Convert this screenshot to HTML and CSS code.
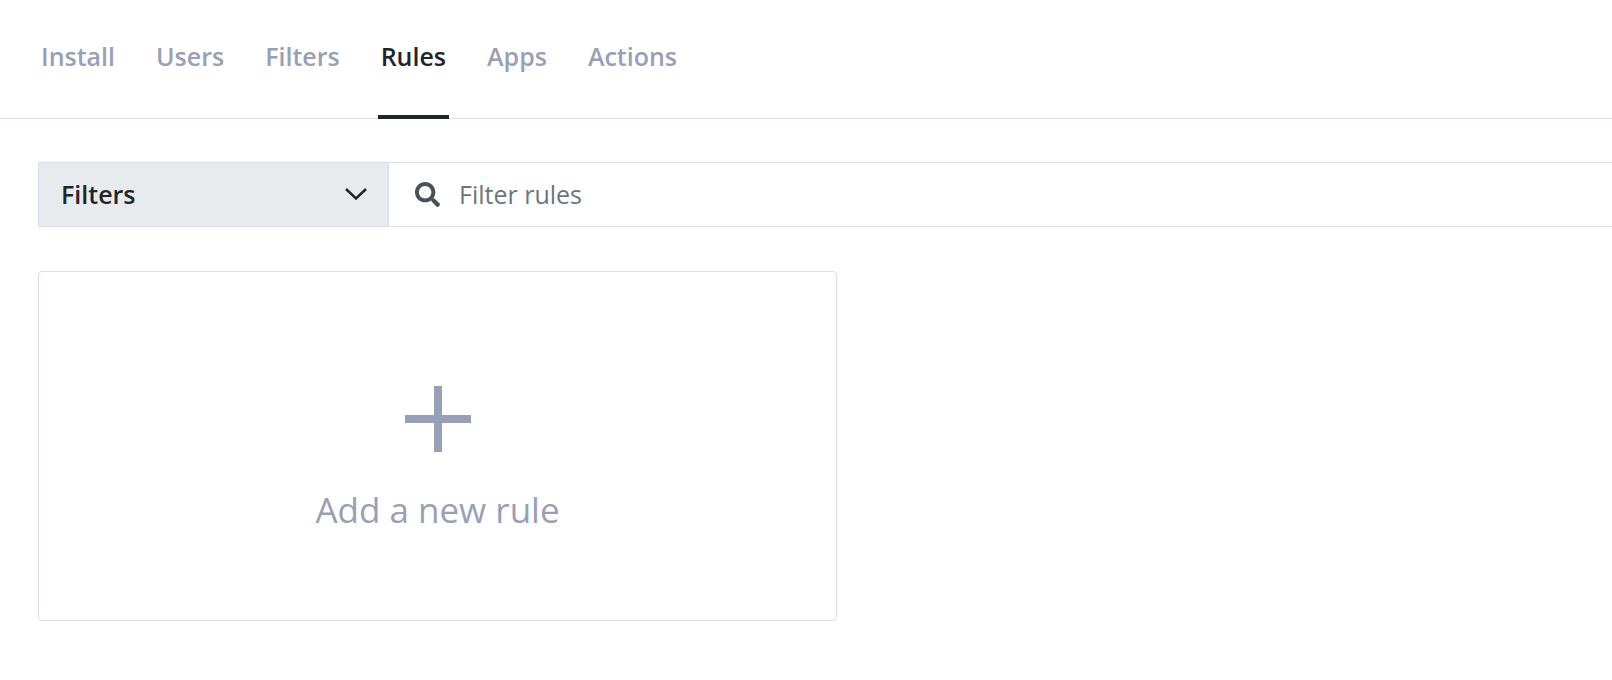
FILE: index.html
```html
<!DOCTYPE html>
<html lang="en">
<head>
<meta charset="utf-8">
<meta name="viewport" content="width=device-width, initial-scale=1">
<title>Rules</title>
<link rel="stylesheet" href="styles.css">
</head>
<body>
<nav class="tabs" aria-label="Sections">
  <a class="tab" href="#install">Install</a>
  <a class="tab" href="#users">Users</a>
  <a class="tab" href="#filters">Filters</a>
  <a class="tab tab-active" href="#rules" aria-current="page">Rules</a>
  <a class="tab" href="#apps">Apps</a>
  <a class="tab" href="#actions">Actions</a>
</nav>
<main class="content">
  <form class="filter-bar">
    <button class="filter-toggle" type="button" aria-haspopup="true">
      <span>Filters</span>
      <svg class="chevron" viewBox="0 0 22 12" aria-hidden="true"><path d="M1 1l10 9.500L21 1"/></svg>
    </button>
    <label class="search">
      <svg class="search-icon" viewBox="0 0 512 512" aria-hidden="true"><path d="M505 442.700L405.300 343c-4.500-4.500-10.600-7-17-7H372c27.600-35.300 44-79.700 44-128C416 93.100 322.900 0 208 0S0 93.100 0 208s93.100 208 208 208c48.300 0 92.700-16.400 128-44v16.300c0 6.400 2.500 12.500 7 17l99.700 99.700c9.400 9.400 24.600 9.400 33.900 0l28.300-28.300c9.400-9.400 9.400-24.600.1-34zM208 336c-70.700 0-128-57.200-128-128 0-70.700 57.200-128 128-128 70.700 0 128 57.200 128 128 0 70.700-57.200 128-128 128z"/></svg>
      <input class="search-input" type="text" placeholder="Filter rules" aria-label="Filter rules">
    </label>
  </form>
  <div class="cards">
    <button class="add-card" type="button">
      <svg class="plus" viewBox="0 0 66 66" aria-hidden="true"><path d="M29 0h8v29h29v8H37v29h-8V37H0v-8h29z"/></svg>
      <span>Add a new rule</span>
    </button>
  </div>
</main>
</body>
</html>
```
FILE: styles.css
```css
* {
  box-sizing: border-box;
}

body {
  margin: 0;
  background: #fff;
  color: #212529;
  font-family: "Open Sans", "Noto Sans", sans-serif;
  font-size: 25px;
}

button,
input {
  font: inherit;
  color: inherit;
}

.tabs {
  display: flex;
  gap: 35px;
  padding-left: 38px;
  box-shadow: inset 0 -1px #dcdde8;
}

.tab {
  padding: 36px 3px 39px;
  border-bottom: 4px solid transparent;
  color: #999fb7;
  font-weight: 600;
  line-height: 40px;
  text-decoration: none;
}

.tab-active {
  border-color: #212529;
  color: #212529;
}

.content {
  padding: 43px 0 60px 38px;
}

.filter-bar {
  display: flex;
  border: solid #dadcec;
  border-width: 1px 0 1px 1px;
}

.filter-toggle {
  display: flex;
  flex: 0 1 350px;
  align-items: center;
  justify-content: space-between;
  padding: 0 21px 1px 22px;
  border: 0;
  border-right: 1px solid #dadcec;
  background: #e8ebee;
  font-weight: 600;
}

.chevron {
  width: 22px;
  height: 12px;
  fill: none;
  stroke: #212529;
  stroke-width: 2.500;
}

.search {
  display: flex;
  flex: 1;
  align-items: center;
  gap: 19px;
  padding-left: 26px;
}

.search-icon {
  width: 25px;
  height: 25px;
  fill: #495057;
}

.search-input {
  flex: 1;
  min-width: 0;
  height: 63px;
  padding: 0 0 2px;
  border: 0;
  outline: 0;
  background: none;
}

.search-input::placeholder {
  color: #6c757d;
  opacity: 1;
}

.cards {
  display: flex;
  margin-top: 44px;
}

.add-card {
  display: flex;
  flex: 0 1 799px;
  flex-direction: column;
  align-items: center;
  gap: 31px;
  padding: 114px 24px 83px;
  border: 1px solid #dcdde8;
  border-radius: 4px;
  background: #fff;
  color: #999fb7;
  font-size: 35px;
  line-height: 54px;
}

.plus {
  width: 66px;
  height: 66px;
  fill: #999fb7;
}
```
